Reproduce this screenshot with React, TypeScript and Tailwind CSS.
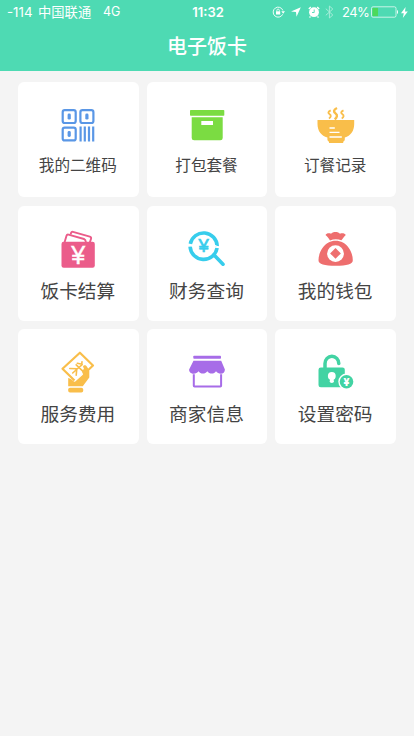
import clsx from "clsx";
import React from "react";

interface MenuItem {
  label: string;
  icon: React.ReactNode;
  small?: boolean;
}

const Icon: React.FC<{ children: React.ReactNode }> = ({ children }) => (
  <svg width="44" height="44" viewBox="0 0 44 44" fill="none">
    {children}
  </svg>
);

const QrIcon = () => (
  <Icon>
    <g stroke="#5a97e6" strokeWidth="2.2">
      <rect x="6.7" y="8.2" width="13" height="12.8" rx="2" />
      <rect x="24.4" y="8.2" width="13" height="12.8" rx="2" />
      <rect x="6.7" y="25.6" width="13" height="12.8" rx="2" />
      <path d="M24.6 24.4v15M28.8 24.4v15M33 24.4v15M37.2 24.4v15" />
    </g>
    <g fill="#5a97e6">
      <rect x="11.6" y="11.6" width="3.2" height="6" rx="1.4" />
      <rect x="29.3" y="11.6" width="3.2" height="6" rx="1.4" />
      <rect x="11.6" y="29" width="3.2" height="6" rx="1.4" />
    </g>
  </Icon>
);

const BoxIcon = () => (
  <Icon>
    <rect x="5" y="8" width="34.3" height="5.7" rx="0.8" fill="#7bdc42" />
    <path
      d="M6.7 15.3h31v20.6a2.4 2.4 0 0 1-2.4 2.4H9.1a2.4 2.4 0 0 1-2.4-2.4z"
      fill="#7bdc42"
    />
    <rect x="16.3" y="19" width="11.7" height="4" fill="#fff" />
  </Icon>
);

const BowlIcon = () => (
  <Icon>
    <path
      d="M3.5 18h36.7v4c0 7-3.6 11.8-9.4 13.6v1.6c0 1-.6 2-1.6 2.600V41H15v-1.200c-1-.6-1.600-1.600-1.600-2.600v-1.600C7.300 33.800 3.500 29 3.500 22z"
      fill="#f9be4a"
    />
    <path
      d="M15.500 26h5.300M15.500 30.300h10M15.500 35h12.300"
      stroke="#fff"
      strokeWidth="1.300"
    />
    <g stroke="#f9be4a" strokeWidth="1.900">
      <path d="M16.700 8.300c-3 1.400-2.700 3-1 4s1.300 3.200-.8 4.200" />
      <path
        d="M23 6c-3.800 2-3.600 4-1.400 5.400s1.600 4.200-1 5.800"
        strokeWidth="2.400"
      />
      <path d="M29.500 8.300c-3 1.400-2.700 3-1 4s1.300 3.200-.8 4.200" />
    </g>
  </Icon>
);

const CardIcon = () => (
  <Icon>
    <g stroke="#eb5c8a" strokeWidth="1.900" strokeLinejoin="round">
      <path d="M8.500 16.500l2-6.700c.3-1 1-1.400 2-1.200l15.500 4.400c1.200.4 1.800 1.600 2 3.500" />
      <path d="M14.500 8.500l.7-1.800c.3-.8 1-1 1.800-.8l16.800 4.700c1.200.4 1.600 1.200 1.200 2.300l-1.200 3.600" />
    </g>
    <rect x="5.500" y="15.700" width="33.300" height="26" rx="2.200" fill="#eb5c8a" />
    <text
      x="22.200"
      y="37.600"
      textAnchor="middle"
      fontSize="25"
      fontFamily="Liberation Sans, sans-serif"
      fill="#fff"
      stroke="#fff"
      strokeWidth="0.500"
    >
      ¥
    </text>
  </Icon>
);

const SearchIcon = () => (
  <Icon>
    <path
      d="M5.300 17.800a13.600 13.600 0 0 1 26.900 2.500M32.100 22a13.600 13.600 0 0 1-27-1.400"
      stroke="#37cdec"
      strokeWidth="3.600"
    />
    <path d="M2.800 18.200l6 2.200M29.300 19.200l5.500 2.300" stroke="#fff" strokeWidth="1.200" />
    <path
      d="M29.300 29.300l8.700 8.900"
      stroke="#37cdec"
      strokeWidth="3.600"
      strokeLinecap="round"
    />
    <text
      x="18.700"
      y="26.300"
      textAnchor="middle"
      fontSize="18.500"
      fontFamily="Liberation Sans, sans-serif"
      fill="#37cdec"
      stroke="#37cdec"
      strokeWidth="0.700"
    >
      ¥
    </text>
  </Icon>
);

const BagIcon = () => (
  <Icon>
    <path
      d="M11.500 9c1-1.600 3-2.200 5.600-1.200 1.400-2.300 7.400-2.300 8.800 0 2.600-1 4.800-.4 5.900 1.200-1.400 1.200-2.600 3-4.400 5.200-3.600-1.400-7.800-1.400-11.400.2-1.400-2.400-3-4-4.500-5.400z"
      fill="#ee6e6e"
    />
    <path
      d="M14.500 16.600c4.300-2.400 10-2.400 14.400 0 5.600 3 9.900 10.400 9.900 17.600 0 4-5.800 5.500-17.100 5.500S4.500 38.200 4.500 34.200c0-7.200 4.400-14.600 10-17.600z"
      fill="#ee6e6e"
    />
    <circle cx="21.500" cy="27.600" r="8.400" fill="#fff" />
    <path d="M21.500 22l5.400 5.400-5.400 5.400-5.400-5.400z" fill="#ee6e6e" />
  </Icon>
);

const PayIcon = () => (
  <Icon>
    <path
      d="M23.900 3.700L37 16.500 19.800 32.700 6.500 19.800z"
      stroke="#f9be4a"
      strokeWidth="2.200"
      strokeLinejoin="round"
    />
    <path
      d="M12.200 29c2 .3 4 1.700 6.200 4l8.600-8.300c-2-2.300-.6-3.600 1-4.600l-1-2.500c.6-1.400 2-1.600 3.200-.8 1 1 2.200 3 3.100 5.200v6.500l-6.500 8.700H12.200z"
      fill="#f9be4a"
    />
    <path d="M18.300 32.500l8.400-7.500" stroke="#fff" strokeWidth="1.200" />
    <g stroke="#f9be4a" strokeWidth="1.600" strokeLinecap="round">
      <path d="M21.300 14.200l4.800 1M26 12.700l-.4 3.800M13.800 19.500l6.800.3M20.200 15.800l6.300 6M26.200 15.500l-9.500 8.500M20.800 19.800l-.6 6.500" />
    </g>
    <rect x="12.200" y="38.800" width="15" height="4.700" rx="1.800" fill="#f9be4a" />
  </Icon>
);

const ShopIcon = () => (
  <Icon>
    <rect x="8.300" y="6.800" width="27.700" height="3" rx="0.800" fill="#a76ce8" />
    <path
      d="M8.500 11.800h27.700l3.700 8.700c.2 5-6.400 5.500-8.900 1.700-1.800 3.200-6.600 3.200-8.700 0-2.100 3.200-6.900 3.200-8.700 0-2.500 3.800-9.700 3.300-9.500-1.700z"
      fill="#a76ce8"
    />
    <path
      d="M8.800 25.200v11.500c0 .6.200.8.800.8h25.700c.6 0 .8-.2.800-.8V25.200"
      stroke="#a76ce8"
      strokeWidth="2"
    />
  </Icon>
);

const LockIcon = () => (
  <Icon>
    <path
      d="M11 19v-4.500a6.900 7.300 0 0 1 13.800 0"
      stroke="#42d3a3"
      strokeWidth="3.500"
      strokeLinecap="round"
    />
    <rect x="4.500" y="18.500" width="26.300" height="19.700" rx="2.300" fill="#42d3a3" />
    <circle cx="17.800" cy="27" r="3.900" fill="#fff" />
    <path d="M16.200 29h3.200l.5 3.500a2.100 1.500 0 0 1-4.200 0z" fill="#fff" />
    <circle cx="32.500" cy="32.800" r="8.200" fill="#fff" />
    <circle cx="32.500" cy="32.800" r="6.800" fill="#42d3a3" />
    <text
      x="32.500"
      y="36.700"
      textAnchor="middle"
      fontSize="11"
      fontWeight="900"
      fontFamily="Roboto, sans-serif"
      fill="#fff"
    >
      ¥
    </text>
  </Icon>
);

const items: MenuItem[] = [
  { label: "我的二维码", icon: <QrIcon />, small: true },
  { label: "打包套餐", icon: <BoxIcon />, small: true },
  { label: "订餐记录", icon: <BowlIcon />, small: true },
  { label: "饭卡结算", icon: <CardIcon /> },
  { label: "财务查询", icon: <SearchIcon /> },
  { label: "我的钱包", icon: <BagIcon /> },
  { label: "服务费用", icon: <PayIcon /> },
  { label: "商家信息", icon: <ShopIcon /> },
  { label: "设置密码", icon: <LockIcon /> },
];

const StatusIcons = () => (
  <div className="flex items-center">
    {/* rotation lock */}
    <svg width="13" height="12" viewBox="0 0 13 12" fill="none">
      <path
        d="M10.700 8.300A5 5 0 1 1 10.900 4.500"
        stroke="#fff"
        strokeWidth="0.900"
      />
      <path d="M9.300 5.300h3.700l-1.800 2.400z" fill="#fff" />
      <rect x="4" y="5.300" width="4.200" height="3.200" fill="#fff" />
      <path d="M4.900 5.500V4.300a1.200 1.200 0 0 1 2.400 0v1.200" stroke="#fff" strokeWidth="0.800" />
    </svg>
    {/* location */}
    <svg className="ml-[6px]" width="10" height="10" viewBox="0 0 10 10">
      <path d="M9.800.2L0 4.500l5 .5.500 4.800z" fill="#fff" />
    </svg>
    {/* alarm */}
    <svg className="ml-[7px]" width="12" height="12" viewBox="0 0 12 12" fill="none">
      <circle cx="6" cy="6.200" r="4.900" fill="#fff" />
      <path d="M.8 3l2-2M11.200 3l-2-2M2.500 10.500l-1 1M9.500 10.500l1 1" stroke="#fff" strokeWidth="1.300" />
      <path d="M6.200 3.500v3H4" stroke="#4edab3" strokeWidth="0.900" />
    </svg>
    {/* bluetooth */}
    <svg className="ml-[5px] opacity-50" width="9" height="14" viewBox="0 0 9 14" fill="none">
      <path d="M.8 3.700l7 6.300-3.400 3V1l3.400 3-7 6.300" stroke="#fff" strokeWidth="1" />
    </svg>
    <span className="ml-[8px] w-[27px] text-[13px] tracking-[-0.500px]">24%</span>
    {/* battery */}
    <svg className="ml-[2px]" width="28" height="12" viewBox="0 0 28 12" fill="none">
      <rect x="0.500" y="0.800" width="24.500" height="10.400" rx="1.600" stroke="#fff" strokeOpacity="0.700" />
      <rect x="1.500" y="1.900" width="5.500" height="8.200" fill="#4cd95b" />
      <path d="M26 4c1.300.3 1.300 3.700 0 4z" fill="#fff" />
    </svg>
    <svg className="ml-[2px]" width="7" height="11" viewBox="0 0 7 11">
      <path d="M4.600 0L0 6.200h2.800L1.800 11l5-6.500H4z" fill="#fff" />
    </svg>
  </div>
);

const App = () => {
  return (
    <div className="min-h-screen bg-[#f4f4f4] font-['Inter','Noto_Sans_CJK_SC',sans-serif]">
      <header className="h-[71px] bg-[#4edab3] text-white">
        <div className="relative flex h-[24px] items-center justify-between pl-[7px] pr-[6px] text-[13px] leading-none">
          <div className="flex items-center pt-px">
            <span className="w-[31px] text-[13.300px]">-114</span>
            <span className="w-[65px] text-[13.300px]">中国联通</span>
            <span className="text-[12.500px]">4G</span>
          </div>
          <span className="absolute left-1/2 ml-px -translate-x-1/2 font-semibold">
            11:32
          </span>
          <StatusIcons />
        </div>
        <h1 className="mt-[8px] text-center text-[20px] leading-[30px] font-medium">
          电子饭卡
        </h1>
      </header>

      <main className="grid grid-cols-3 gap-x-[8px] gap-y-[8.700px] px-[18px] pt-[11px]">
        {items.map((item) => (
          <button
            key={item.label}
            className="flex h-[115px] flex-col items-center rounded-md bg-white pt-[20px] text-[#444]"
          >
            {item.icon}
            <span
              className={clsx(
                "-ml-px whitespace-nowrap",
                item.small
                  ? "text-[15.600px] leading-[40px]"
                  : "text-[18.700px] leading-[43px]"
              )}
            >
              {item.label}
            </span>
          </button>
        ))}
      </main>
    </div>
  );
};

export default App;
